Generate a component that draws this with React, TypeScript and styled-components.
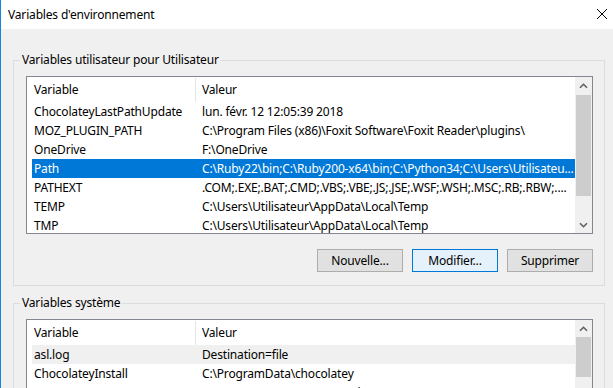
import React from "react";
import styled, { createGlobalStyle } from "styled-components";

const GlobalStyle = createGlobalStyle`
  html, body {
    margin: 0;
    padding: 0;
    overflow: hidden;
    background: #f0f0f0;
  }
`;

const Window = styled.div`
  display: flex;
  flex-direction: column;
  width: 613px;
  height: 388px;
  overflow: hidden;
  border-left: 1px solid #1883d7;
  box-sizing: border-box;
  font-family: "Segoe UI", "Noto Sans", sans-serif;
  font-size: 12px;
  letter-spacing: -0.17px;
  color: #000;
`;
const TitleBar = styled.div`
  display: flex;
  flex: 0 0 29px;
  align-items: center;
  justify-content: space-between;
  padding: 0 5px 0 7px;
  background: #fff;
`;
const Title = styled.span`
  line-height: 16px;
`;
const CloseButton = styled.span`
  display: flex;
  width: 12px;
  height: 12px;
  margin-bottom: 2px;
`;
const Body = styled.div`
  flex: 1;
  padding: 23px 8px 0 12px;
  background: #f0f0f0;
`;
const GroupBox = styled.fieldset<{ $last?: boolean }>`
  margin: ${(p) => (p.$last ? "9px 0 0" : "0")};
  padding: 8px 11px 13px 12px;
  min-width: 0;
  border: 1px solid #dcdcdc;
  ${(p) => p.$last && "height: 200px;"}
`;
const Legend = styled.legend`
  margin-left: -6px;
  padding: 0 2px;
  line-height: 16px;
`;
const ListView = styled.div<{ $height: number }>`
  display: flex;
  height: ${(p) => p.$height}px;
  border: 1px solid #828790;
  background: #fff;
  overflow: hidden;
`;
const ListContent = styled.div`
  flex: 1;
  min-width: 0;
  padding-left: 5px;
`;
const Columns = styled.div`
  display: grid;
  grid-template-columns: 163px 1px 1fr;
`;
const Header = styled(Columns)`
  height: 25px;
  align-items: center;
`;
const HeaderSep = styled.div`
  align-self: stretch;
  margin-top: 1px;
  background: #e5e5e5;
`;
const Row = styled(Columns)<{ $state?: "selected" | "hover" }>`
  height: 19px;
  line-height: 19px;
  background: ${(p) =>
    p.$state === "selected" ? "#0078d7" : p.$state === "hover" ? "#f0f0f0" : "transparent"};
  color: ${(p) => (p.$state === "selected" ? "#fff" : "#000")};
`;
const NameCell = styled.div`
  padding-left: 2px;
  white-space: nowrap;
  overflow: hidden;
`;
const ValueCell = styled.div`
  grid-column: 3;
  padding-left: 6px;
  white-space: nowrap;
  overflow: hidden;
`;
const ScrollBar = styled.div`
  display: flex;
  flex: 0 0 17px;
  flex-direction: column;
  background: #f0f0f0;
`;
const ArrowButton = styled.div`
  display: flex;
  flex: 0 0 17px;
  align-items: center;
  justify-content: center;
`;
const Track = styled.div`
  flex: 1;
  padding: 0 1px;
`;
const Thumb = styled.div<{ $top: number; $height: number }>`
  margin-top: ${(p) => p.$top}px;
  height: ${(p) => p.$height}px;
  background: #cdcdcd;
`;
const Buttons = styled.div`
  display: flex;
  justify-content: flex-end;
  gap: 9px;
  margin-top: 15px;
`;
const Button = styled.button<{ $default?: boolean }>`
  width: 86px;
  height: 23px;
  padding: 0;
  border: 1px solid ${(p) => (p.$default ? "#0078d7" : "#adadad")};
  background: ${(p) => (p.$default ? "#e5f1fb" : "#e1e1e1")};
  font: inherit;
  letter-spacing: inherit;
  color: #000;
`;

type Variable = { name: string; value: string; state?: "selected" | "hover" };

const userVars: Variable[] = [
  { name: "ChocolateyLastPathUpdate", value: "lun. févr. 12 12:05:39 2018" },
  { name: "MOZ_PLUGIN_PATH", value: "C:\\Program Files (x86)\\Foxit Software\\Foxit Reader\\plugins\\" },
  { name: "OneDrive", value: "F:\\OneDrive" },
  {
    name: "Path",
    value: "C:\\Ruby22\\bin;C:\\Ruby200-x64\\bin;C:\\Python34;C:\\Users\\Utilisateu...",
    state: "selected",
  },
  { name: "PATHEXT", value: ".COM;.EXE;.BAT;.CMD;.VBS;.VBE;.JS;.JSE;.WSF;.WSH;.MSC;.RB;.RBW;...." },
  { name: "TEMP", value: "C:\\Users\\Utilisateur\\AppData\\Local\\Temp" },
  { name: "TMP", value: "C:\\Users\\Utilisateur\\AppData\\Local\\Temp" },
];

const systemVars: Variable[] = [
  { name: "asl.log", value: "Destination=file", state: "hover" },
  { name: "ChocolateyInstall", value: "C:\\ProgramData\\chocolatey" },
  { name: "ComSpec", value: "C:\\WINDOWS\\system32\\cmd.exe" },
];

function Chevron({ down }: { down?: boolean }) {
  return (
    <svg width="9" height="6" viewBox="0 0 9 6">
      <path
        d={down ? "M1 1.2 L4.5 4.7 L8 1.2" : "M1 4.8 L4.5 1.3 L8 4.8"}
        fill="none"
        stroke="#606060"
        strokeWidth="1.6"
      />
    </svg>
  );
}

function VariableList({
  vars,
  height,
  thumbTop,
  thumbHeight,
}: {
  vars: Variable[];
  height: number;
  thumbTop: number;
  thumbHeight: number;
}) {
  return (
    <ListView $height={height}>
      <ListContent>
        <Header>
          <NameCell>Variable</NameCell>
          <HeaderSep />
          <ValueCell>Valeur</ValueCell>
        </Header>
        {vars.map((v) => (
          <Row key={v.name} $state={v.state}>
            <NameCell>{v.name}</NameCell>
            <ValueCell>{v.value}</ValueCell>
          </Row>
        ))}
      </ListContent>
      <ScrollBar>
        <ArrowButton>
          <Chevron />
        </ArrowButton>
        <Track>
          <Thumb $top={thumbTop} $height={thumbHeight} />
        </Track>
        <ArrowButton>
          <Chevron down />
        </ArrowButton>
      </ScrollBar>
    </ListView>
  );
}

export default function App() {
  return (
    <>
      <GlobalStyle />
      <Window>
        <TitleBar>
          <Title>Variables d'environnement</Title>
          <CloseButton>
            <svg width="12" height="12" viewBox="0 0 12 12">
              <path d="M1 1 L11 11 M11 1 L1 11" stroke="#000" strokeWidth="1" />
            </svg>
          </CloseButton>
        </TitleBar>
        <Body>
          <GroupBox>
            <Legend>Variables utilisateur pour Utilisateur</Legend>
            <VariableList vars={userVars} height={156} thumbTop={1} thumbHeight={101} />
            <Buttons>
              <Button>Nouvelle...</Button>
              <Button $default>Modifier...</Button>
              <Button>Supprimer</Button>
            </Buttons>
          </GroupBox>
          <GroupBox $last>
            <Legend>Variables système</Legend>
            <VariableList vars={systemVars} height={160} thumbTop={0} thumbHeight={40} />
          </GroupBox>
        </Body>
      </Window>
    </>
  );
}
